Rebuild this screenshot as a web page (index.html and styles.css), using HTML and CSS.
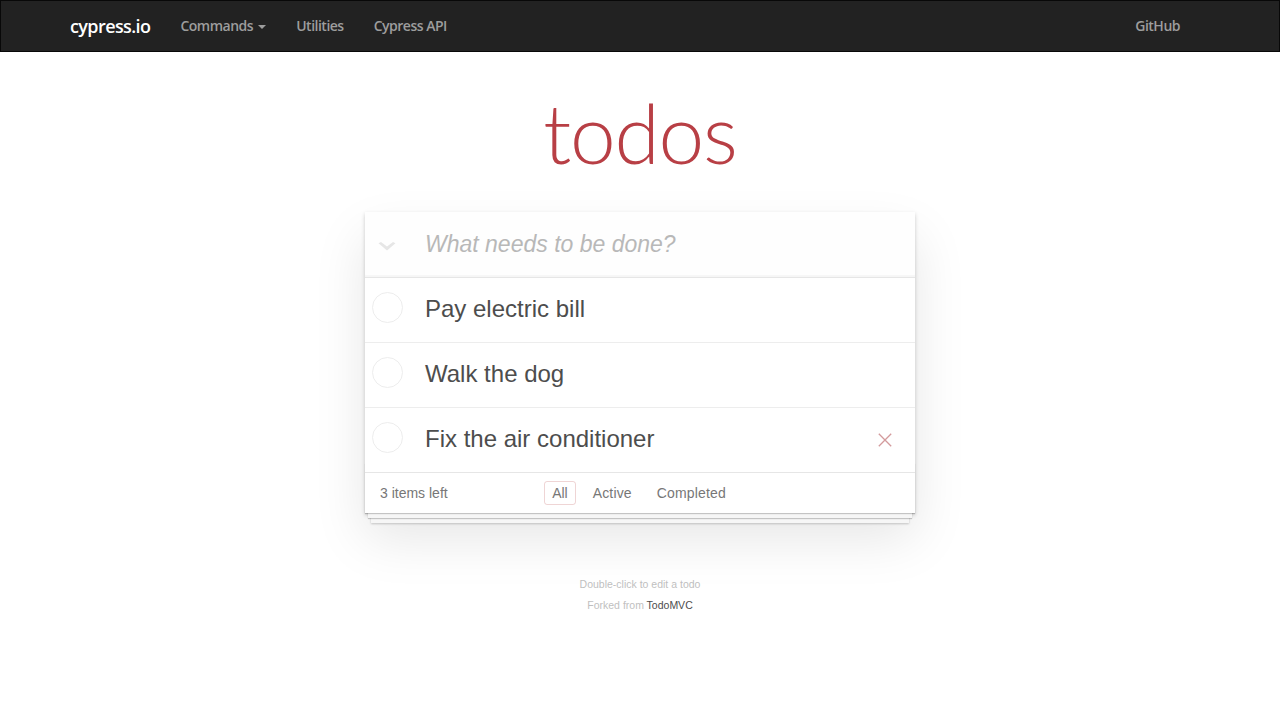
FILE: index.html
```html
<!DOCTYPE html>
<html lang="en">
<head>
<meta charset="utf-8">
<title>cypress.io todos</title>
<link rel="stylesheet" href="styles.css">
</head>
<body>
<nav class="navbar">
  <div class="nav-container">
    <a class="brand" href="#">cypress.io</a>
    <ul class="nav">
      <li><a href="#">Commands <span class="caret"></span></a></li>
      <li><a href="#">Utilities</a></li>
      <li><a href="#">Cypress API</a></li>
    </ul>
    <ul class="nav nav-right">
      <li><a href="#">GitHub</a></li>
    </ul>
  </div>
</nav>

<section class="todoapp">
  <header class="header">
    <h1 class="title">todos</h1>
    <span class="toggle-all">
      <svg width="18" height="9" viewBox="0 0 18 9"><path d="M0.5 1.2 L3 0 L9 4.6 L15 0 L17.5 1.2 L9 8.6 Z" fill="#e6e6e6"/></svg>
    </span>
    <input class="new-todo" placeholder="What needs to be done?">
  </header>
  <ul class="todo-list">
    <li class="todo">
      <span class="toggle"></span>
      <label class="todo-label">Pay electric bill</label>
    </li>
    <li class="todo">
      <span class="toggle"></span>
      <label class="todo-label">Walk the dog</label>
    </li>
    <li class="todo">
      <span class="toggle"></span>
      <label class="todo-label">Fix the air conditioner</label>
      <span class="destroy">
        <svg width="14" height="14" viewBox="0 0 14 14"><path d="M0.8 0.8 L13.2 13.2 M13.2 0.8 L0.8 13.2" stroke="#d39a9c" stroke-width="1.3" fill="none"/></svg>
      </span>
    </li>
  </ul>
  <footer class="footer">
    <span class="todo-count">3 items left</span>
    <ul class="filters">
      <li><a class="selected" href="#">All</a></li>
      <li><a href="#">Active</a></li>
      <li><a href="#">Completed</a></li>
    </ul>
  </footer>
</section>

<footer class="info">
  <p>Double-click to edit a todo</p>
  <p>Forked from <a href="#">TodoMVC</a></p>
</footer>
</body>
</html>
```

FILE: styles.css
```css
* { box-sizing: border-box; }

body {
  margin: 0;
  background: #fff;
  font-family: "Liberation Sans", Arial, sans-serif;
  font-size: 14px;
  color: #4d4d4d;
}

a { text-decoration: none; }

ul { list-style: none; margin: 0; padding: 0; }

/* navbar */
.navbar {
  background: #222;
  border: 1px solid #080808;
  height: 52px;
}
.nav-container {
  width: 1170px;
  margin: 0 auto;
  padding: 0 30px 0 0;
  display: flex;
  align-items: center;
  height: 50px;
  font-family: "Open Sans", "Noto Sans", sans-serif;
}
.brand {
  color: #fff;
  font-size: 18px;
  font-weight: 600;
  line-height: 20px;
  padding: 15px;
  letter-spacing: -0.6px;
}
.nav { display: flex; }
.nav a {
  display: block;
  padding: 15px;
  line-height: 20px;
  color: #9d9d9d;
  font-size: 14px;
  font-weight: 600;
  letter-spacing: -0.5px;
}
.nav-right { margin-left: auto; }
.caret {
  display: inline-block;
  width: 0;
  height: 0;
  margin-left: 2px;
  vertical-align: middle;
  border-top: 4px solid #9d9d9d;
  border-left: 4px solid transparent;
  border-right: 4px solid transparent;
}

/* todo app */
.todoapp {
  position: relative;
  width: 550px;
  margin: 160px auto 0;
  background: #fff;
  box-shadow: 0 2px 4px rgba(0,0,0,0.2), 0 25px 50px rgba(0,0,0,0.1);
}
.header {
  display: flex;
  align-items: center;
  height: 65px;
  background: rgba(0,0,0,0.003);
  box-shadow: inset 0 -2px 1px rgba(0,0,0,0.03);
}
.title {
  position: absolute;
  top: -130px;
  left: 0;
  right: 0;
  margin: 0;
  text-align: center;
  font-family: Lato, "Liberation Sans", sans-serif;
  font-size: 82px;
  font-weight: 300;
  line-height: 100px;
  color: #b83f45;
  letter-spacing: -1.2px;
}
.toggle-all {
  width: 60px;
  padding-left: 13px;
  display: flex;
  align-items: center;
  height: 100%;
  padding-top: 3px;
}
.toggle-all svg { display: block; }
.new-todo {
  flex: 1;
  min-width: 0;
  border: none;
  outline: none;
  background: transparent;
  padding: 0 16px 0 0;
  font-family: "Liberation Sans", Arial, sans-serif;
  font-size: 23px;
  color: #4d4d4d;
}
.new-todo::placeholder {
  font-style: italic;
  color: #b8b8b8;
}

.todo-list { border-top: 1px solid #e6e6e6; }
.todo {
  display: flex;
  align-items: center;
  height: 65px;
  border-bottom: 1px solid #ededed;
  padding: 0 23px 0 7px;
}
.todo:last-child { height: 64px; border-bottom: none; }
.toggle {
  width: 31px;
  height: 31px;
  border: 1px solid #ededed;
  border-radius: 50%;
  align-self: flex-start;
  margin-top: 14px;
  flex: none;
}
.todo-label {
  margin-left: 22px;
  font-size: 24px;
  line-height: 28px;
  color: #4d4d4d;
  padding-bottom: 3px;
}
.destroy {
  margin-left: auto;
  display: flex;
}
.destroy svg { display: block; }

.footer {
  position: relative;
  height: 41px;
  padding: 10px 15px;
  border-top: 1px solid #e6e6e6;
  color: #777;
  display: flex;
  align-items: center;
  justify-content: center;
}
.footer::before {
  content: "";
  position: absolute;
  left: 0;
  right: 0;
  bottom: 0;
  height: 50px;
  overflow: hidden;
  box-shadow: 0 1px 1px rgba(0,0,0,0.2),
              0 8px 0 -3px #f6f6f6,
              0 9px 1px -3px rgba(0,0,0,0.2),
              0 16px 0 -6px #f6f6f6,
              0 17px 2px -6px rgba(0,0,0,0.2);
  pointer-events: none;
}
.todo-count {
  position: absolute;
  left: 15px;
  top: 10px;
  line-height: 20px;
}
.filters {
  display: flex;
  gap: 3px;
  margin-left: -2px;
}
.filters a {
  display: block;
  margin: 3px;
  padding: 3px 7px;
  border: 1px solid transparent;
  border-radius: 3px;
  color: #777;
  line-height: 16px;
  letter-spacing: 0.15px;
}
.filters a.selected { border-color: rgba(175,47,47,0.2); letter-spacing: 0; }

.info {
  margin: 61px auto 0;
  text-align: center;
  font-size: 10.5px;
  color: #bfbfbf;
}
.info p { margin: 0; line-height: 21px; }
.info a { color: #4d4d4d; }
```
